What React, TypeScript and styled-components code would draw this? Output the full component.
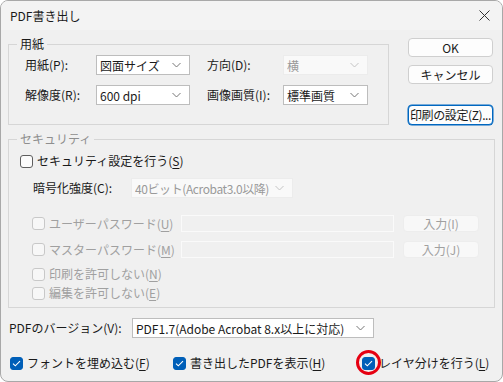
import React from "react";
import styled, { createGlobalStyle, css } from "styled-components";

const GlobalStyle = createGlobalStyle`
  html, body {
    margin: 0;
    padding: 0;
    background: #ffffff;
  }
  body {
    font-family: "Noto Sans CJK JP", "Noto Sans", sans-serif;
    font-size: 12px;
    color: #1a1a1a;
  }
`;

const Window = styled.div`
  box-sizing: border-box;
  width: 503px;
  height: 382px;
  border: 1px solid #a8a8a8;
  border-radius: 8px;
  background: #f0f0f0;
  overflow: hidden;
  display: flex;
  flex-direction: column;
`;

const TitleBar = styled.div`
  height: 29px;
  flex: none;
  display: flex;
  align-items: center;
  justify-content: space-between;
  padding: 0 9px 0 9px;
  background: #f3f3f3;
`;

const Title = styled.span`
  font-size: 12px;
  line-height: 16px;
`;

const Body = styled.div`
  padding: 6px 7px 0 7px;
  display: flex;
  flex-direction: column;
`;

const TopRow = styled.div`
  display: flex;
  align-items: flex-start;
`;

const Group = styled.fieldset<{ $width: number }>`
  box-sizing: border-box;
  width: ${(p) => p.$width}px;
  margin: 0;
  padding: 0;
  border: 1px solid #d6d6d6;
  min-width: 0;
`;

const Legend = styled.legend<{ $muted?: boolean }>`
  margin-left: 8px;
  padding: 0 3px;
  font-size: 12px;
  line-height: 16px;
  color: ${(p) => (p.$muted ? "#8e8e8e" : "#1a1a1a")};
`;

const PaperGrid = styled.div`
  display: grid;
  grid-template-columns: 71px 94px 17px 76px 85px;
  grid-template-rows: 20px 20px;
  row-gap: 10px;
  align-items: center;
  padding: 3px 0 19px 16px;
`;

const Label = styled.span<{ $disabled?: boolean; $indent?: number }>`
  white-space: nowrap;
  line-height: 16px;
  padding-left: ${(p) => p.$indent ?? 0}px;
  color: ${(p) => (p.$disabled ? "#a0a0a0" : "#1a1a1a")};
`;

const SelectBox = styled.div<{ $width: number; $disabled?: boolean }>`
  box-sizing: border-box;
  width: ${(p) => p.$width}px;
  height: 20px;
  display: flex;
  align-items: center;
  justify-content: space-between;
  gap: 4px;
  padding: 0 8px 0 3px;
  background: ${(p) => (p.$disabled ? "#f9f9f9" : "#ffffff")};
  border: 1px solid ${(p) => (p.$disabled ? "#ececec" : "#bdbdbd")};
  color: ${(p) => (p.$disabled ? "#9a9a9a" : "#1a1a1a")};
  white-space: nowrap;
  overflow: hidden;
`;

const SelectValue = styled.span<{ $tight?: boolean }>`
  overflow: hidden;
  letter-spacing: ${(p) => (p.$tight ? "-0.4px" : "0")};
`;

const Chevron = ({ color }: { color: string }) => (
  <svg width="9" height="6" viewBox="0 0 9 6" style={{ flex: "none" }}>
    <path d="M0.5 1 L4.5 5 L8.5 1" fill="none" stroke={color} strokeWidth="1" />
  </svg>
);

const Select = ({
  width,
  value,
  disabled,
  tight,
}: {
  width: number;
  value: string;
  disabled?: boolean;
  tight?: boolean;
}) => (
  <SelectBox $width={width} $disabled={disabled}>
    <SelectValue $tight={tight}>{value}</SelectValue>
    <Chevron color={disabled ? "#c4c4c4" : "#777777"} />
  </SelectBox>
);

const ButtonColumn = styled.div`
  display: flex;
  flex-direction: column;
  margin-left: 19px;
  margin-top: 2px;
`;

const Button = styled.div<{ $focused?: boolean; $gap?: number }>`
  box-sizing: border-box;
  width: 85px;
  height: ${(p) => (p.$focused ? 20 : 19)}px;
  margin-top: ${(p) => p.$gap ?? 0}px;
  display: flex;
  align-items: center;
  justify-content: center;
  background: #fdfdfd;
  border: 1px solid #cfcfcf;
  border-radius: 4px;
  white-space: nowrap;
  line-height: 16px;
  ${(p) =>
    p.$focused &&
    css`
      border-color: #0067c0;
      box-shadow: 0 0 0 0.5px #0067c0;
      letter-spacing: -0.4px;
    `}
`;

const SecurityBody = styled.div`
  display: flex;
  flex-direction: column;
  padding: 6px 0 6px 11px;
`;

const CheckRow = styled.label<{ $indent?: number; $gap?: number }>`
  height: 16px;
  display: flex;
  align-items: center;
  gap: 4px;
  margin-left: ${(p) => p.$indent ?? 0}px;
  margin-top: ${(p) => p.$gap ?? 0}px;
  white-space: nowrap;
  position: relative;
`;

const Box = styled.span<{ $checked?: boolean; $disabled?: boolean }>`
  box-sizing: border-box;
  width: 13px;
  height: 13px;
  flex: none;
  border-radius: 3px;
  display: flex;
  align-items: center;
  justify-content: center;
  border: 1px solid
    ${(p) => (p.$checked ? "#005fb8" : p.$disabled ? "#c8c8c8" : "#5e5e5e")};
  background: ${(p) => (p.$checked ? "#005fb8" : p.$disabled ? "#f7f7f7" : "#fbfbfb")};
`;

const CheckText = styled.span<{ $disabled?: boolean }>`
  color: ${(p) => (p.$disabled ? "#a0a0a0" : "#1a1a1a")};
  line-height: 16px;
`;

const Ul = styled.span`
  text-decoration: underline;
  text-underline-offset: 2px;
`;

/* annotation ring drawn over the last checkbox */
const RedRing = styled.span`
  position: absolute;
  left: -6px;
  top: -5px;
  width: 19px;
  height: 19px;
  border: 3px solid #e60012;
  border-radius: 50%;
  pointer-events: none;
`;

const Checkbox = ({
  checked,
  disabled,
  children,
  indent,
  gap,
  marked,
}: {
  checked?: boolean;
  disabled?: boolean;
  children: React.ReactNode;
  indent?: number;
  gap?: number;
  marked?: boolean;
}) => (
  <CheckRow $indent={indent} $gap={gap}>
    <Box $checked={checked} $disabled={disabled}>
      {checked && (
        <svg width="9" height="7" viewBox="0 0 9 7">
          <path d="M1 3.6 L3.3 5.8 L8 1.2" fill="none" stroke="#ffffff" strokeWidth="1.1" />
        </svg>
      )}
    </Box>
    <CheckText $disabled={disabled}>{children}</CheckText>
    {marked && <RedRing />}
  </CheckRow>
);

const FieldRow = styled.div<{ $gap: number }>`
  display: flex;
  align-items: center;
  margin-top: ${(p) => p.$gap}px;
`;

const PasswordRow = styled.div<{ $gap: number }>`
  display: grid;
  grid-template-columns: 149px 213px 76px;
  align-items: center;
  height: 17px;
  margin-top: ${(p) => p.$gap}px;
  margin-left: 12px;
  & > :nth-child(3) {
    margin-left: 9px;
  }
`;

const DisabledInput = styled.div`
  box-sizing: border-box;
  height: 17px;
  background: #f0f0f0;
  border: 1px solid #fafafa;
`;

const DisabledButton = styled.div`
  box-sizing: border-box;
  width: 76px;
  height: 17px;
  display: flex;
  align-items: center;
  justify-content: center;
  background: #f8f8f8;
  border: 1px solid #ededed;
  border-radius: 4px;
  color: #a0a0a0;
  line-height: 15px;
`;

const BottomChecks = styled.div`
  display: grid;
  grid-template-columns: 163px 189px auto;
  margin-top: 17px;
  padding-left: 2px;
`;

export default function App() {
  return (
    <>
      <GlobalStyle />
      <Window>
        <TitleBar>
          <Title>PDF書き出し</Title>
          <svg width="11" height="11" viewBox="0 0 11 11" style={{ marginRight: 3 }}>
            <path d="M0.5 0.5 L10.5 10.5 M10.5 0.5 L0.5 10.5" stroke="#333" strokeWidth="1" />
          </svg>
        </TitleBar>
        <Body>
          <TopRow>
            <Group $width={381}>
              <Legend>用紙</Legend>
              <PaperGrid>
                <Label>用紙(P):</Label>
                <Select width={94} value="図面サイズ" />
                <span />
                <Label>方向(D):</Label>
                <Select width={85} value="横" disabled />
                <Label>解像度(R):</Label>
                <Select width={94} value="600 dpi" />
                <span />
                <Label>画像画質(I):</Label>
                <Select width={85} value="標準画質" />
              </PaperGrid>
            </Group>
            <ButtonColumn>
              <Button>OK</Button>
              <Button $gap={8}>キャンセル</Button>
              <Button $gap={21} $focused>
                印刷の設定(Z)...
              </Button>
            </ButtonColumn>
          </TopRow>

          <Group $width={487} style={{ marginTop: 6 }}>
            <Legend $muted>セキュリティ</Legend>
            <SecurityBody>
              <Checkbox>
                セキュリティ設定を行う(<Ul>S</Ul>)
              </Checkbox>
              <FieldRow $gap={9}>
                <Label $indent={13} style={{ width: 98 }}>
                  暗号化強度(C):
                </Label>
                <Select width={162} value="40ビット(Acrobat3.0以降)" disabled tight />
              </FieldRow>
              <PasswordRow $gap={17}>
                <Checkbox disabled>
                  ユーザーパスワード(<Ul>U</Ul>)
                </Checkbox>
                <DisabledInput />
                <DisabledButton>入力(I)</DisabledButton>
              </PasswordRow>
              <PasswordRow $gap={9}>
                <Checkbox disabled>
                  マスターパスワード(<Ul>M</Ul>)
                </Checkbox>
                <DisabledInput />
                <DisabledButton>入力(J)</DisabledButton>
              </PasswordRow>
              <Checkbox disabled indent={12} gap={8}>
                印刷を許可しない(<Ul>N</Ul>)
              </Checkbox>
              <Checkbox disabled indent={12} gap={3}>
                編集を許可しない(<Ul>E</Ul>)
              </Checkbox>
            </SecurityBody>
          </Group>

          <FieldRow $gap={10}>
            <Label $indent={1} style={{ width: 123 }}>
              PDFのバージョン(V):
            </Label>
            <Select width={242} value="PDF1.7(Adobe Acrobat 8.x以上に対応)" />
          </FieldRow>

          <BottomChecks>
            <Checkbox checked>
              フォントを埋め込む(<Ul>F</Ul>)
            </Checkbox>
            <Checkbox checked>
              書き出したPDFを表示(<Ul>H</Ul>)
            </Checkbox>
            <Checkbox checked marked>
              レイヤ分けを行う(<Ul>L</Ul>)
            </Checkbox>
          </BottomChecks>
        </Body>
      </Window>
    </>
  );
}
